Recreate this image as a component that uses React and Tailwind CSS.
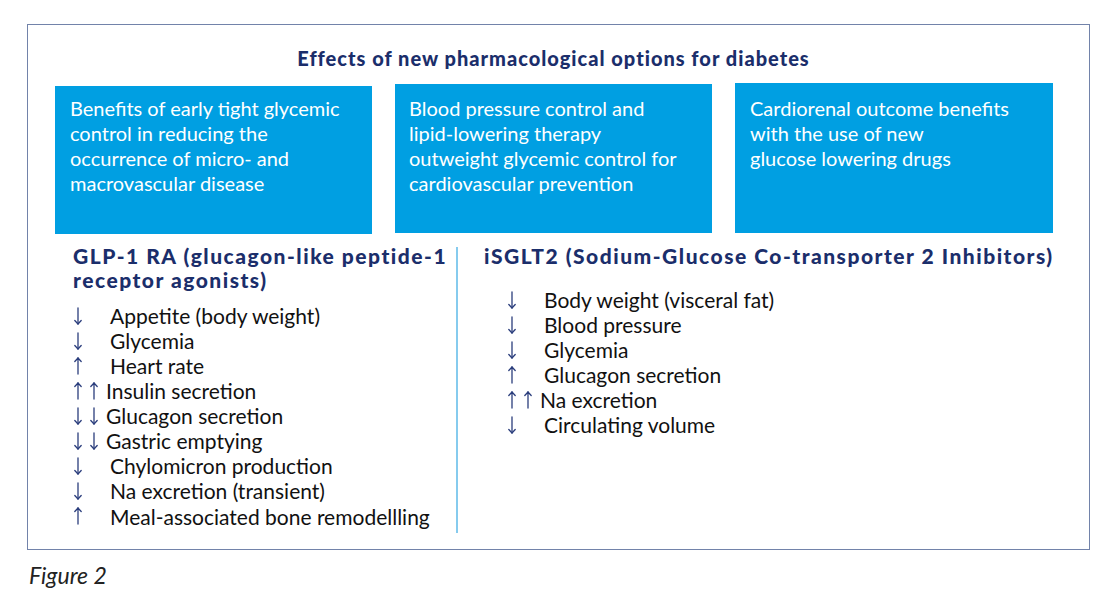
import React from "react";

const NAVY = "#1b2e6b";

function Arrow({ dir }) {
  return (
    <svg width="10" height="18" viewBox="0 0 10 18" className="shrink-0">
      {dir === "down" ? (
        <g stroke="#2a3d7c" strokeWidth="1.3" fill="none" strokeLinecap="round">
          <line x1="5" y1="1" x2="5" y2="17" />
          <polyline points="1.8,13.5 5,17 8.2,13.5" />
        </g>
      ) : (
        <g stroke="#2a3d7c" strokeWidth="1.3" fill="none" strokeLinecap="round">
          <line x1="5" y1="1" x2="5" y2="17" />
          <polyline points="1.8,4.5 5,1 8.2,4.5" />
        </g>
      )}
    </svg>
  );
}

function Row({ arrows, text }) {
  const dbl = arrows.length === 2;
  return (
    <div className="flex items-center h-[25.1px]">
      <Arrow dir={arrows[0]} />
      {dbl ? (
        <>
          <span className="w-[6px]" />
          <Arrow dir={arrows[1]} />
          <span className="w-[7px]" />
        </>
      ) : (
        <span className="w-[27px]" />
      )}
      <span className="whitespace-nowrap">{text}</span>
    </div>
  );
}

const left = [
  [["down"], "Appetite (body weight)"],
  [["down"], "Glycemia"],
  [["up"], "Heart rate"],
  [["up", "up"], "Insulin secretion"],
  [["down", "down"], "Glucagon secretion"],
  [["down", "down"], "Gastric emptying"],
  [["down"], "Chylomicron production"],
  [["down"], "Na excretion (transient)"],
  [["up"], "Meal-associated bone remodellling"],
];

const right = [
  [["down"], "Body weight (visceral fat)"],
  [["down"], "Blood pressure"],
  [["down"], "Glycemia"],
  [["up"], "Glucagon secretion"],
  [["up", "up"], "Na excretion"],
  [["down"], "Circulating volume"],
];

export default function App() {
  return (
    <div
      className="w-[1119px] h-[606px] bg-white pt-[24px] pl-[27px]"
      style={{ fontFamily: "Lato, 'Liberation Sans', sans-serif" }}
    >
      <div className="w-[1063px] h-[526px] border border-[#7283aa] flex flex-col">
        <div
          className="text-center font-black text-[20px] leading-[24px] tracking-[1px] mt-[21px] pr-[10px]"
          style={{ color: NAVY }}
        >
          Effects of new pharmacological options for diabetes
        </div>
        <div className="flex items-start gap-[23px] pl-[27px] mt-[13px] text-white text-[20px] leading-[25px] whitespace-nowrap">
          <div className="w-[317px] h-[148px] bg-[#009fe2] mt-[3px] pl-[15px] pt-[10px]">
            Benefits of early tight glycemic<br />control in reducing the<br />occurrence of micro- and<br />macrovascular disease
          </div>
          <div className="w-[317px] h-[149px] bg-[#009fe2] mt-[1px] pl-[14px] pt-[12px]">
            Blood pressure control and<br />lipid-lowering therapy<br />outweight glycemic control for<br />cardiovascular prevention
          </div>
          <div className="w-[318px] h-[150px] bg-[#009fe2] pl-[15px] pt-[13px]">
            Cardiorenal outcome benefits<br />with the use of new<br />glucose lowering drugs
          </div>
        </div>
        <div className="flex items-start mt-[10px]">
          <div className="w-[383px] ml-[45px]">
            <div
              className="font-black text-[21px] leading-[24px] tracking-[1.5px] whitespace-nowrap"
              style={{ color: NAVY }}
            >
              GLP-1 RA (glucagon-like peptide-1<br />receptor agonists)
            </div>
            <div className="mt-[11px] text-[21px] text-[#111]">
              {left.map(([a, t], i) => (
                <Row key={i} arrows={a} text={t} />
              ))}
            </div>
          </div>
          <div className="w-0 h-[286px] mt-[3px] border-l-2 border-[#86cbee]" />
          <div className="pl-[26px]">
            <div
              className="font-black text-[21px] leading-[24px] tracking-[1.5px] whitespace-nowrap"
              style={{ color: NAVY }}
            >
              iSGLT2 (Sodium-Glucose Co-transporter 2 Inhibitors)
            </div>
            <div className="mt-[19px] pl-[23px] text-[21px] text-[#111]">
              {right.map(([a, t], i) => (
                <Row key={i} arrows={a} text={t} />
              ))}
            </div>
          </div>
        </div>
      </div>
      <div className="mt-[12px] ml-[2px] italic text-[23px] leading-[26px] text-[#222]">
        Figure 2
      </div>
    </div>
  );
}
